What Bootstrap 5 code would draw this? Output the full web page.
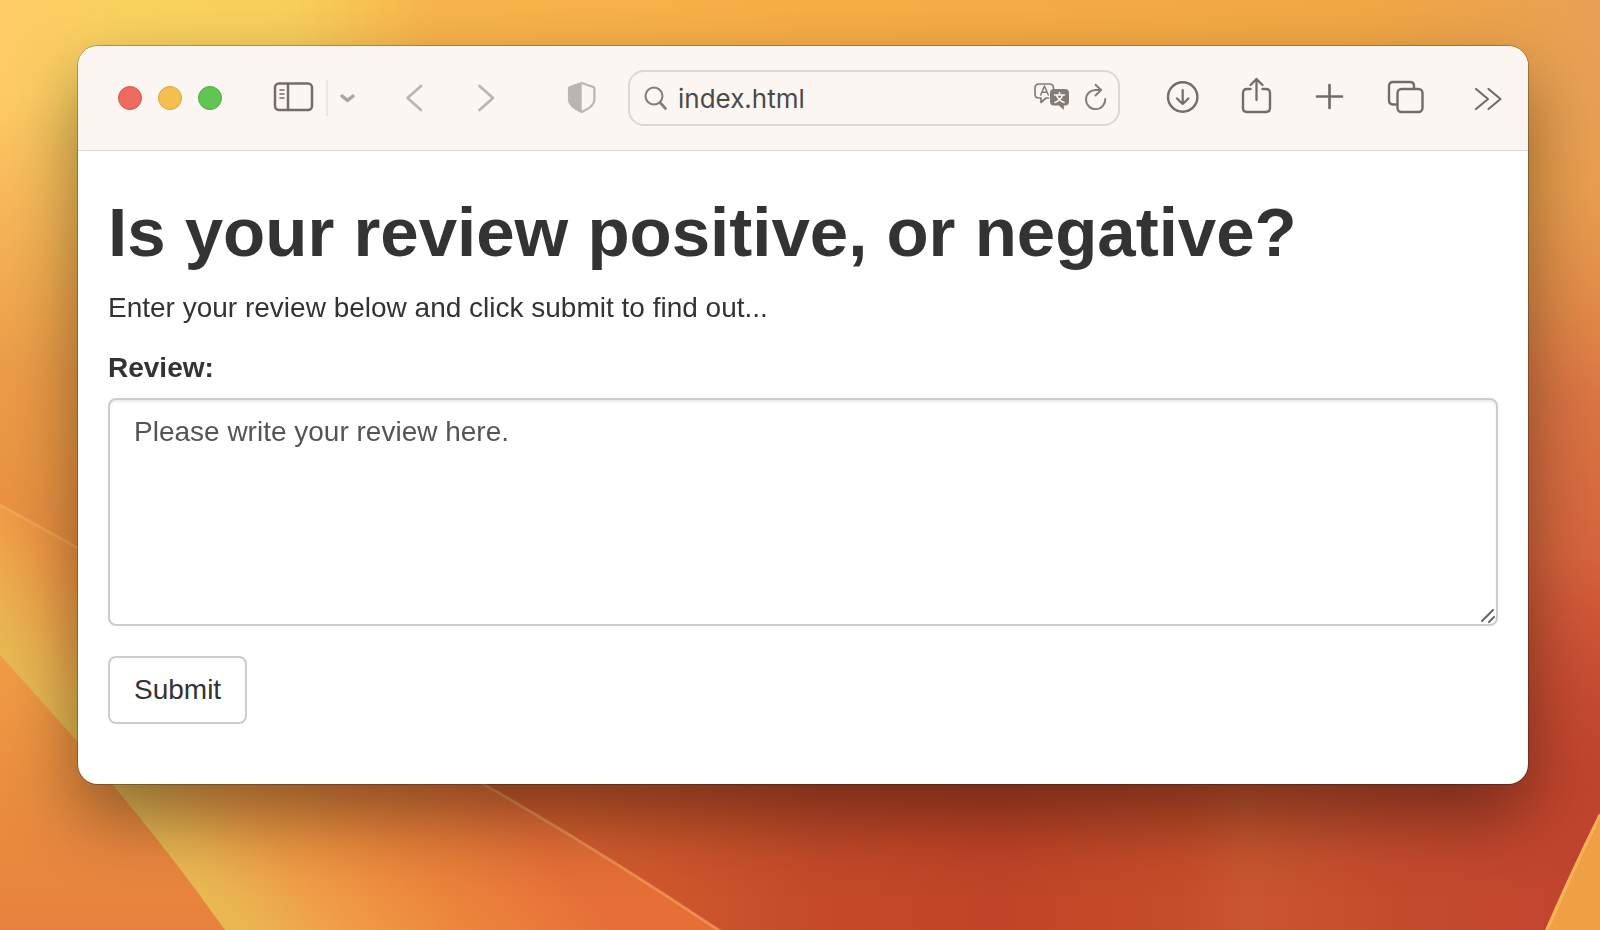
<!DOCTYPE html>
<html lang="en">
<head>
<meta charset="utf-8">
<meta name="viewport" content="width=device-width, initial-scale=1">
<title>Review sentiment</title>
<link href="https://cdn.jsdelivr.net/npm/bootstrap@5.3.0/dist/css/bootstrap.min.css" rel="stylesheet">
<style>
  body {
    background: #e08a3c;
    color: #333;
    font-family: "Liberation Sans", Arial, sans-serif;
    font-size: 28px;
    line-height: 40px;
  }
  .desktop { padding: 46px 72px 60px 78px; }
  .wallpaper { z-index: -1; }
  .app-window {
    border-radius: 20px;
    box-shadow: 0 0 0 1px rgba(0, 0, 0, .25), 0 32px 72px rgba(0, 0, 0, .42);
  }

  /* Toolbar */
  .toolbar {
    height: 105px;
    padding: 0 20px 0 40px;
    background: #fcf6f2;
    border-bottom: 1px solid #d8d8d8;
    border-radius: 20px 20px 0 0;
    color: #736c67;
  }
  .toolbar svg { display: block; fill: none; stroke: currentColor; stroke-width: 2; stroke-linecap: round; stroke-linejoin: round; }
  .tool { padding: 0; border: 0; background: none; color: inherit; }
  .lights { gap: 16px; margin-right: 48px; }
  .light { width: 24px; height: 24px; padding: 0; border: 1px solid; border-radius: 50%; }
  .light-close { background: #ec6a5e; border-color: #d9554a; }
  .light-min { background: #f4bf4f; border-color: #dba53b; }
  .light-zoom { background: #61c554; border-color: #4eac41; }
  .divider { width: 2px; height: 36px; background: #ebe6e2; }
  .faded { color: #bab5b0; }
  .history { gap: 28px; margin: 0 52px 0 32px; }
  .address {
    min-width: 0;
    height: 56px;
    margin: 0 44px 0 24px;
    padding: 0 8px 0 14px;
    border: 2px solid #dcd7d3;
    border-radius: 16px;
    color: #827b76;
  }
  .address input {
    width: 0;
    min-width: 0;
    padding: 2px 0 0;
    border: 0;
    outline: 0;
    background: none;
    color: #4b4a49;
    font: 26px/32px Inter, sans-serif;
  }
  .address-actions { gap: 12px; }
  .tools { gap: 32px; }

  /* Page */
  .page { padding: 42px 30px 60px; }
  .page h1 { margin: 0 0 16px; font-size: 69px; font-weight: 700; line-height: 79px; }
  .page p { margin-bottom: 20px; }
  .page label { margin-bottom: 10px; font-weight: 700; }
  .page textarea, .page .btn {
    padding: 12px 24px;
    border: 2px solid #ccc;
    border-radius: 8px;
    color: #333;
    font-size: 28px;
    line-height: 40px;
  }
  .page textarea { display: block; margin-bottom: 30px; box-shadow: inset 0 2px 2px rgba(0, 0, 0, .075); }
  .page textarea::placeholder { color: #555; }
  .page textarea::-webkit-resizer {
    background: url("data:image/svg+xml,%3Csvg xmlns='http://www.w3.org/2000/svg' width='15' height='15'%3E%3Cpath d='M1 12 12 1M8 13l5-5' stroke='%23666' stroke-width='2' stroke-linecap='round'/%3E%3C/svg%3E") no-repeat;
  }
  .page .btn { background: #fff; }
</style>
</head>
<body>

<svg class="wallpaper position-fixed top-0 start-0 w-100 h-100" viewBox="0 0 1600 930" preserveAspectRatio="none" aria-hidden="true">
  <defs>
    <linearGradient id="sky" x1="0" x2="1" y1="0" y2="0">
      <stop offset="0" stop-color="#ffcb66"/>
      <stop offset=".08" stop-color="#fad35f"/>
      <stop offset=".18" stop-color="#fad05c"/>
      <stop offset=".27" stop-color="#f8b54b"/>
      <stop offset=".5" stop-color="#f9ae46"/>
      <stop offset=".85" stop-color="#f3a844"/>
      <stop offset="1" stop-color="#e8a055"/>
    </linearGradient>
    <linearGradient id="dusk" x1="0" x2="0" y1="0" y2="1">
      <stop offset=".1" stop-color="#ee9a45" stop-opacity="0"/>
      <stop offset=".4" stop-color="#ec9c48"/>
      <stop offset=".6" stop-color="#e98f40"/>
    </linearGradient>
    <linearGradient id="red" x1="0" x2="0" y1="0" y2="1">
      <stop offset=".2" stop-color="#e08a4c" stop-opacity="0"/>
      <stop offset=".42" stop-color="#dc7744"/>
      <stop offset=".65" stop-color="#d65f3b"/>
      <stop offset=".85" stop-color="#c74e32"/>
      <stop offset="1" stop-color="#c0442c"/>
    </linearGradient>
    <linearGradient id="ember" gradientUnits="userSpaceOnUse" x1="560" y1="0" x2="1600" y2="0">
      <stop offset="0" stop-color="#d6602f"/>
      <stop offset=".25" stop-color="#c44a29"/>
      <stop offset=".42" stop-color="#c04427"/>
      <stop offset=".6" stop-color="#c64d2a"/>
      <stop offset=".66" stop-color="#c9562f"/>
      <stop offset=".8" stop-color="#c54b2d"/>
      <stop offset="1" stop-color="#c0442e"/>
    </linearGradient>
    <linearGradient id="fadein" x1="0" x2="0" y1="0" y2="1">
      <stop offset=".6" stop-color="#fff" stop-opacity="0"/>
      <stop offset=".85" stop-color="#fff"/>
    </linearGradient>
    <mask id="low"><rect width="1600" height="930" fill="url(#fadein)"/></mask>
    <linearGradient id="petal" gradientUnits="userSpaceOnUse" x1="112" y1="784" x2="367" y2="575">
      <stop offset="0" stop-color="#e8b852"/>
      <stop offset=".08" stop-color="#ebb250"/>
      <stop offset=".27" stop-color="#f09c46"/>
      <stop offset=".55" stop-color="#ec853c"/>
      <stop offset=".9" stop-color="#e66f37"/>
    </linearGradient>
    <linearGradient id="base" x1="0" x2="0" y1="0" y2="1">
      <stop offset="0" stop-color="#f29d45"/>
      <stop offset=".5" stop-color="#ea8e40"/>
      <stop offset="1" stop-color="#e8813e"/>
    </linearGradient>
  </defs>
  <rect width="1600" height="930" fill="url(#sky)"/>
  <rect width="1600" height="930" fill="url(#dusk)"/>
  <rect x="800" width="800" height="930" fill="url(#red)"/>
  <rect width="1600" height="930" fill="url(#ember)" mask="url(#low)"/>
  <path d="M0 504 78 547Q300 668 485 784 600 850 720 930H0Z" fill="url(#petal)"/>
  <path d="M0 505 78 548Q300 669 485 785 600 851 720 931" fill="none" stroke="#f9b56b" stroke-width="3" opacity=".45"/>
  <path d="M0 655 78 742 112 784Q168 850 225 930H0Z" fill="url(#base)"/>
  <path d="M1600 813Q1572 868 1545 930H1600Z" fill="#efa045"/>
  <path d="M1600 815Q1573 870 1547 930" fill="none" stroke="#fab458" stroke-width="3"/>
</svg>

<div class="desktop min-vh-100">
  <div class="app-window bg-white">
    <header class="toolbar d-flex align-items-center">
      <div class="lights d-flex">
        <button class="light light-close" type="button" aria-label="Close"></button>
        <button class="light light-min" type="button" aria-label="Minimize"></button>
        <button class="light light-zoom" type="button" aria-label="Zoom"></button>
      </div>
      <div class="d-flex align-items-center gap-2">
        <button class="tool" type="button" aria-label="Show sidebar">
          <svg width="48" height="44" viewBox="0 0 48 44" stroke-width="2"><rect x="5" y="7.500" width="37" height="26.500" rx="4" stroke-width="2.500"/><path d="M18 8v26" stroke-width="2.500"/><path d="M10 14h4M10 18h4M10 22h4" stroke-width="1.600"/></svg>
        </button>
        <span class="divider"></span>
        <button class="tool" type="button" aria-label="Tab groups">
          <svg width="24" height="44" viewBox="0 0 24 44"><path d="m6 20 5.500 4.500L17 20" stroke="#aaa4a0" stroke-width="3.500"/></svg>
        </button>
      </div>
      <div class="history d-flex faded">
        <button class="tool" type="button" aria-label="Back">
          <svg width="44" height="44" viewBox="0 0 44 44"><path d="M29 10 15.500 22 29 34" stroke-width="2.700"/></svg>
        </button>
        <button class="tool" type="button" aria-label="Forward">
          <svg width="44" height="44" viewBox="0 0 44 44"><path d="M15.500 10 29 22 15.500 34" stroke-width="2.700"/></svg>
        </button>
      </div>
      <button class="tool faded" type="button" aria-label="Privacy report">
        <svg width="44" height="44" viewBox="0 0 44 44"><path d="M21.700 7 9.500 11.200q-.5.200-.5.800v12c0 5 5 8.500 12.700 12 7.700-3.500 12.700-7 12.700-12V12q0-.6-.5-.8Z" stroke-width="2.200"/><path d="M21.700 7 9.500 11.200q-.5.200-.5.800v12c0 5 5 8.500 12.700 12Z" fill="currentColor" stroke="none"/></svg>
      </button>
      <div class="address d-flex align-items-center flex-grow-1">
        <svg class="flex-shrink-0" width="34" height="44" viewBox="0 0 34 44"><circle cx="10" cy="20" r="8.500"/><path d="m16 26.500 5.500 6" stroke-width="2.600"/></svg>
        <input class="flex-grow-1" type="text" value="index.html" aria-label="Address">
        <div class="address-actions d-flex">
          <button class="tool" type="button" aria-label="Translate">
            <svg width="36" height="44" viewBox="0 0 36 44"><path d="M14.500 22H12l-5 4.500V22H5q-4 0-4-4v-6q0-4 4-4h10.500q4 0 4 4v1" stroke-width="1.700"/><path d="m6.700 19 3.800-9 3.800 9M8 16.200h5" stroke-width="1.500"/><path d="M20 13h11q4 0 4 4v8.500q0 4-4 4h-1.200V34L25 29.500h-5q-4 0-4-4V17q0-4 4-4Z" fill="currentColor" stroke="none"/><path d="M20.500 19h10M25.500 16.500V19M28.500 19q-1.500 5-7.500 7.500M22.500 19q1.500 5 7.500 7.500" stroke="#fcf6f2" stroke-width="1.600"/></svg>
          </button>
          <button class="tool" type="button" aria-label="Reload">
            <svg width="28" height="44" viewBox="0 0 28 44"><path d="M19 14h-4.500A9.600 9.600 0 1 0 23.200 23" stroke-width="1.900"/><path d="m13.500 8.800 5.500 5.200-5.500 5.500" stroke-width="1.900"/></svg>
          </button>
        </div>
      </div>
      <div class="tools d-flex">
        <button class="tool" type="button" aria-label="Downloads">
          <svg width="40" height="44" viewBox="0 0 40 44" ><circle cx="18.700" cy="21" r="14.700" stroke-width="2.400"/><path d="M18.700 14v14M13 22.500l5.700 5.500 5.700-5.500" stroke-width="2.200"/></svg>
        </button>
        <button class="tool" type="button" aria-label="Share">
          <svg width="40" height="44" viewBox="0 0 40 44"><path d="M14.500 13H11q-4 0-4 4v15q0 4 4 4h19q4 0 4-4V17q0-4-4-4h-3.500" stroke-width="2.400"/><path d="M20.500 24V3.500M14.500 9l6-6 6 6" stroke-width="2.300"/></svg>
        </button>
        <button class="tool" type="button" aria-label="New tab">
          <svg width="40" height="44" viewBox="0 0 40 44"><path d="M9 20.500h25M21.500 9v23" stroke-width="2.700"/></svg>
        </button>
        <button class="tool" type="button" aria-label="Tab overview">
          <svg width="48" height="44" viewBox="0 0 48 44"><path d="M16 28.500h-3q-4 0-4-4V10q0-4 4-4h17q4 0 4 4v2" stroke-width="2.400"/><rect x="17.500" y="13" width="25" height="23" rx="4" stroke-width="2.400"/></svg>
        </button>
        <button class="tool" type="button" aria-label="More">
          <svg width="48" height="44" viewBox="0 0 48 44"><path d="m16 13 12 10-12 10M28.500 13l12 10-12 10" stroke-width="2.200"/></svg>
        </button>
      </div>
    </header>

    <main class="page">
      <h1>Is your review positive, or negative?</h1>
      <p>Enter your review below and click submit to find out...</p>
      <form>
        <label class="d-block" for="review">Review:</label>
        <textarea class="form-control" id="review" rows="5" placeholder="Please write your review here."></textarea>
        <button class="btn" type="submit">Submit</button>
      </form>
    </main>
  </div>
</div>

<script src="https://cdn.jsdelivr.net/npm/bootstrap@5.3.0/dist/js/bootstrap.bundle.min.js"></script>
</body>
</html>
